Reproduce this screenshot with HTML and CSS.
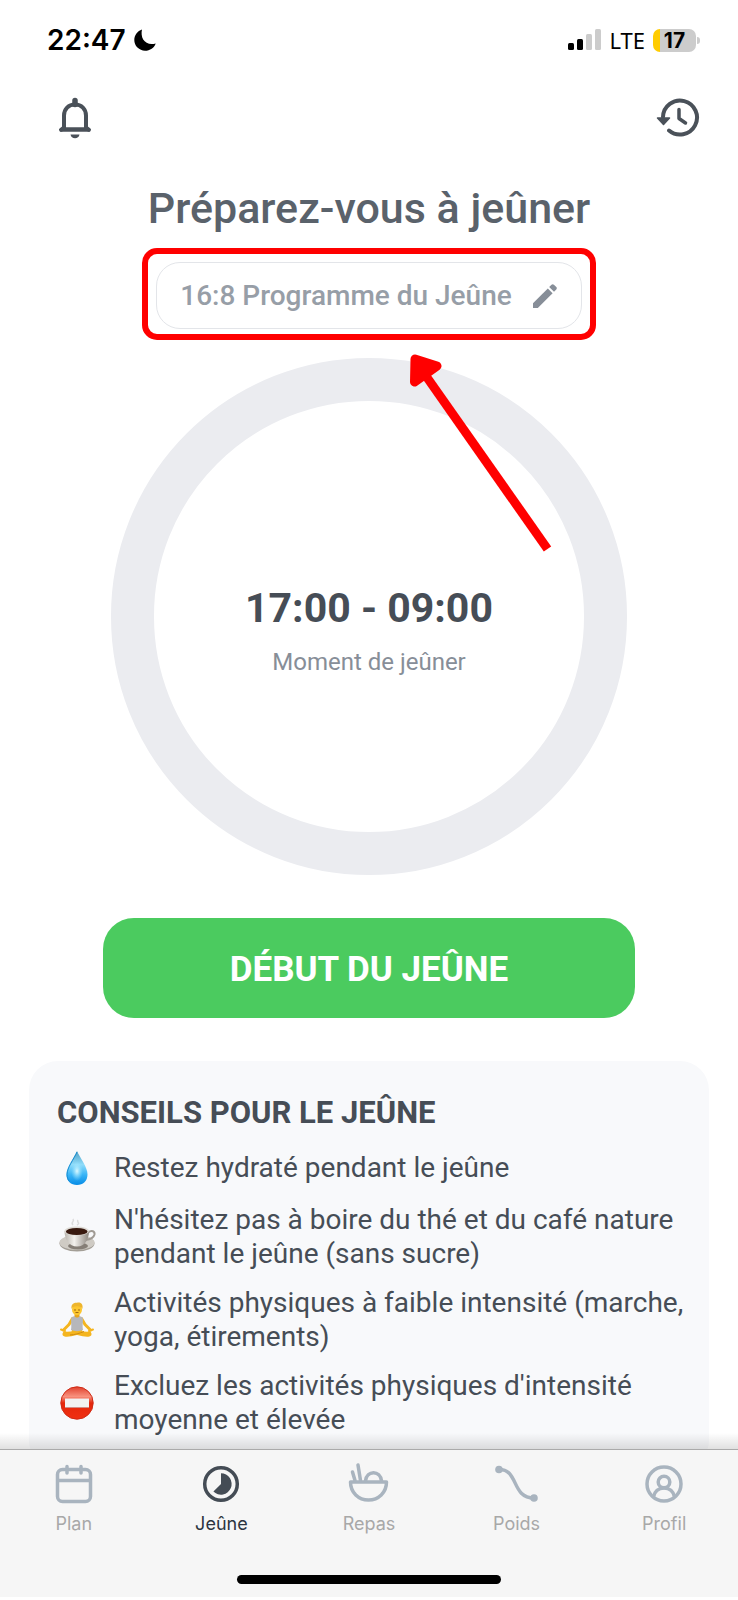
FILE: index.html
```html
<!DOCTYPE html>
<html lang="fr">
<head>
    <meta charset="UTF-8">
    <meta name="viewport" content="width=device-width, initial-scale=1.0">
    <title>Jeûne</title>
    <link rel="stylesheet" href="styles.css">
</head>
<body>
    <!-- Barre d'état -->
    <div class="status-bar">
        <div class="status-left">
            <span class="clock">22:47</span>
            <svg class="moon" width="22" height="22" viewBox="0 0 22 22">
                <path d="M8 0.500C3.500 2 0.300 6 0.300 11a10.700 10.700 0 0 0 10.700 10.700c5 0 9.300-3 10.700-7.300C16 16.200 11.500 14 9.200 10.500 7.500 7.500 7.200 3.800 8 .5z" fill="#000"/>
            </svg>
        </div>
        <div class="status-right">
            <svg width="33" height="22" viewBox="0 0 33 22">
                <rect x="0" y="14" width="6" height="7" rx="1.500" fill="#000"/>
                <rect x="9" y="10" width="6" height="11" rx="1.500" fill="#000"/>
                <rect x="18" y="5" width="6" height="16" rx="1.500" fill="#ccc"/>
                <rect x="27" y="0" width="6" height="21" rx="1.500" fill="#ccc"/>
            </svg>
            <span class="network">LTE</span>
            <span class="battery">17</span>
        </div>
    </div>

    <main class="content">
        <div class="toolbar">
            <button class="icon-btn" type="button" aria-label="Notifications">
                <svg width="34" height="42" viewBox="0 0 34 42" fill="none" stroke="#4a5159" stroke-width="4">
                    <path d="M17 3.500v4" stroke-width="5.500" stroke-linecap="round"/>
                    <path d="M6 32V18.500C6 12 10.500 7.500 17 7.500s11 4.500 11 11V32"/>
                    <path d="M4 32.500h26" stroke-width="4.500"/>
                    <path d="M3 32.800L6 30.500M31 32.800L28 30.500" stroke-width="4" stroke-linecap="round"/>
                    <path d="M12.500 37.500h9c-.5 2.500-2.200 3.800-4.500 3.800s-4-1.300-4.500-3.800z" fill="#4a5159" stroke="none"/>
                </svg>
            </button>
            <button class="icon-btn" type="button" aria-label="Historique">
                <svg width="44" height="42" viewBox="0 0 44 42" fill="none" stroke="#4a5159" stroke-width="4" stroke-linecap="round">
                    <path d="M7 20A17 17 0 1 1 13 33.500"/>
                    <path d="M1.500 21h12l-6 6.500z" fill="#4a5159" stroke-width="1.500" stroke-linejoin="round"/>
                    <path d="M23 12.500v9l6.500 4.500" stroke-width="3.500" stroke-linejoin="round"/>
                </svg>
            </button>
        </div>

        <h1 class="title">Préparez-vous à jeûner</h1>

        <div class="highlight">
            <button class="program" type="button">
                16:8 Programme du Jeûne
                <svg width="26" height="26" viewBox="0 0 26 26" fill="#878e98">
                    <path d="M1 20.200L15.800 5.400l4.800 4.800L5.800 25H1z"/>
                    <path d="M17.200 4l2.300-2.300c.7-.7 1.700-.7 2.400 0l2.400 2.400c.7.7.7 1.700 0 2.400L22 8.800z"/>
                </svg>
            </button>
        </div>

        <div class="ring">
            <div class="time">17:00 - 09:00</div>
            <div class="time-label">Moment de jeûner</div>
            <svg class="arrow" width="150" height="204" viewBox="0 0 150 204">
                <path d="M16 22L137.500 195" stroke="#f00" stroke-width="9" fill="none"/>
                <path d="M5 5L27 12 4.500 28z" fill="#f00" stroke="#f00" stroke-width="9" stroke-linejoin="round"/>
            </svg>
        </div>

        <button class="start" type="button">DÉBUT DU JEÛNE</button>

        <section class="tips">
            <h2>CONSEILS POUR LE JEÛNE</h2>
            <ul>
                <li>
                    <svg width="40" height="40" viewBox="0 0 40 40">
                        <defs>
                            <linearGradient id="water" x1="0" y1="0" x2="0" y2="1">
                                <stop offset="0" stop-color="#4f9fc4"/>
                                <stop offset=".4" stop-color="#8fdcfa"/>
                                <stop offset=".7" stop-color="#38b4f6"/>
                                <stop offset="1" stop-color="#078ce6"/>
                            </linearGradient>
                            <radialGradient id="shine">
                                <stop offset="0" stop-color="#dcf9ff"/>
                                <stop offset="1" stop-color="#8fe3ff" stop-opacity="0"/>
                            </radialGradient>
                        </defs>
                        <path d="M20 3c3 7 10.500 16 10.500 23.500C30.500 33 26 37 20 37S9.500 33 9.500 26.500C9.500 19 17 10 20 3z" fill="url(#water)"/>
                        <path d="M20 4c-3 7-10 15.500-10 22.500 0 3 1 5.500 2.500 7" fill="none" stroke="#168bd0" stroke-width="1"/>
                        <ellipse cx="20" cy="23" rx="6" ry="10" fill="url(#shine)"/>
                    </svg>
                    <span>Restez hydraté pendant le jeûne</span>
                </li>
                <li>
                    <svg width="40" height="40" viewBox="0 0 40 40">
                        <defs>
                            <linearGradient id="cup" x1="0" y1="0" x2="1" y2="0">
                                <stop offset="0" stop-color="#b9b5ae"/>
                                <stop offset=".4" stop-color="#f3f1ed"/>
                                <stop offset="1" stop-color="#8d8780"/>
                            </linearGradient>
                        </defs>
                        <path d="M16 8c-3-3 2-3 0-6M20 8c4-2-1-3 1-5" fill="none" stroke="#c8c8c8" stroke-width="1.500" opacity=".6"/>
                        <ellipse cx="20" cy="26.500" rx="17.500" ry="8" fill="#a39e96"/>
                        <ellipse cx="20" cy="25.500" rx="17.500" ry="7.500" fill="#cfcbc4"/>
                        <ellipse cx="21" cy="29" rx="10" ry="3.500" fill="#857e76"/>
                        <path d="M31 15.500c4-3 7-1 6.500 2-1 4-5 5-9 5.500" fill="none" stroke="#a09b94" stroke-width="2"/>
                        <path d="M7.500 14C7.500 22 12 29.500 20 29.500s12-7.500 12-15.500z" fill="url(#cup)"/>
                        <ellipse cx="19.700" cy="14" rx="12.200" ry="4.500" fill="#dedbd5"/>
                        <ellipse cx="19.700" cy="14.500" rx="10.800" ry="3.600" fill="#38190f"/>
                    </svg>
                    <span>N'hésitez pas à boire du thé et du café nature pendant le jeûne (sans sucre)</span>
                </li>
                <li>
                    <svg width="40" height="40" viewBox="0 0 40 40">
                        <g stroke="#f4b51f" fill="none" stroke-linecap="round" stroke-linejoin="round">
                            <path d="M15.500 18.500L12 24.500 6.500 30M24.500 18.500L28 24.500 33.500 30" stroke-width="3"/>
                            <path d="M4 29.500l4 1.500M36 29.500L32 31" stroke-width="2"/>
                            <path d="M8 34c5 .8 9-1 15-2.500M32 34c-5 .8-9-1-15-2.500" stroke-width="5"/>
                        </g>
                        <path d="M14.500 17.500c3-2.300 8-2.300 11 0 1.200 3-.5 7 .5 12.500-4 1.500-8 1.500-12 0 1-5.500-.7-9.500.5-12.500z" fill="#b6b7bb"/>
                        <path d="M13 35c5-.3 9-1.500 14-3.500" stroke="#d08c10" stroke-width="1" fill="none"/>
                        <path d="M17.500 12h5v4c-1 2-4 2-5 0z" fill="#e9a61b"/>
                        <ellipse cx="20" cy="9.500" rx="5" ry="5.800" fill="#fcc62e"/>
                        <path d="M14.600 9C13.800 5 16 2.500 20 2.800c4-1 6.400 1.700 5.400 6.200-.7-2-2-2.800-5.400-2.800S15.300 7 14.600 9z" fill="#eeb52c"/>
                        <path d="M17 10h2M21 10h2M18.500 12.500h3" stroke="#a06a10" stroke-width="1"/>
                    </svg>
                    <span>Activités physiques à faible intensité (marche, yoga, étirements)</span>
                </li>
                <li>
                    <svg width="40" height="40" viewBox="0 0 40 40">
                        <defs>
                            <linearGradient id="stop" x1="0" y1="0" x2="0" y2="1">
                                <stop offset="0" stop-color="#e0402c"/>
                                <stop offset=".3" stop-color="#f8917e"/>
                                <stop offset=".5" stop-color="#e4270b"/>
                                <stop offset="1" stop-color="#f03012"/>
                            </linearGradient>
                        </defs>
                        <circle cx="20" cy="20" r="16.200" fill="url(#stop)" stroke="#cf2b16" stroke-width="1"/>
                        <rect x="8" y="16" width="24" height="9" fill="#b0281a"/>
                        <rect x="8" y="15.500" width="24" height="9" fill="#f2f2f2"/>
                    </svg>
                    <span>Excluez les activités physiques d'intensité moyenne et élevée</span>
                </li>
            </ul>
        </section>
    </main>

    <!-- Navigation du bas -->
    <footer class="bottom">
        <nav class="tabs">
            <a class="tab" href="#">
                <svg width="44" height="44" viewBox="0 0 44 44" fill="none" stroke="#a9b4bf" stroke-width="3.500" stroke-linecap="round">
                    <rect x="5.500" y="7.500" width="33" height="32" rx="5"/>
                    <path d="M6 18.500h32M15 4.500v6.500M29 4.500v6.500"/>
                </svg>
                <span>Plan</span>
            </a>
            <a class="tab active" href="#">
                <svg width="44" height="44" viewBox="0 0 44 44">
                    <circle cx="22" cy="22" r="16.300" fill="none" stroke="#444c55" stroke-width="3.500"/>
                    <path d="M22 11.300a10.700 10.700 0 1 1-7.600 18.300L22 22z" fill="#444c55"/>
                </svg>
                <span>Jeûne</span>
            </a>
            <a class="tab" href="#">
                <svg width="44" height="44" viewBox="0 0 44 44" fill="none" stroke="#a9b4bf" stroke-width="3.500" stroke-linecap="round" stroke-linejoin="round">
                    <path d="M3.500 20h36c0 10.500-8 18-18 18s-18-7.500-18-18z"/>
                    <path d="M18.500 19c1-11 15-11 16 0M13.500 18.500L11 3M8 18.500L5.500 10"/>
                </svg>
                <span>Repas</span>
            </a>
            <a class="tab" href="#">
                <svg width="44" height="44" viewBox="0 0 44 44" fill="none" stroke="#a9b4bf" stroke-width="3.500">
                    <path d="M4 7.500C24 7 16 36 39 36"/>
                    <circle cx="4" cy="7.500" r="3.800" fill="#a9b4bf" stroke="none"/>
                    <circle cx="39" cy="36" r="3.800" fill="#a9b4bf" stroke="none"/>
                </svg>
                <span>Poids</span>
            </a>
            <a class="tab" href="#">
                <svg width="44" height="44" viewBox="0 0 44 44" fill="none" stroke="#a9b4bf" stroke-width="3.500">
                    <circle cx="22" cy="22" r="17"/>
                    <circle cx="22" cy="20" r="5.800"/>
                    <path d="M11.500 35c1-5.500 5-9 10.500-9s9.500 3.500 10.500 9"/>
                </svg>
                <span>Profil</span>
            </a>
        </nav>
        <div class="home-indicator"></div>
    </footer>
</body>
</html>
```

FILE: styles.css
```css
* {
    box-sizing: border-box;
}

body {
    margin: 0;
    height: 100vh;
    display: flex;
    flex-direction: column;
    background: #fff;
    color: #464d56;
    font-family: Roboto, "Noto Sans", sans-serif;
    padding-bottom: 3px;
}

button {
    font-family: inherit;
    cursor: pointer;
}

svg {
    display: block;
    flex-shrink: 0;
}

/* Barre d'état */
.status-bar {
    display: flex;
    justify-content: space-between;
    align-items: center;
    height: 80px;
    padding: 0 38px 0 47px;
    color: #000;
}

.status-left, .status-right {
    display: flex;
    align-items: center;
    gap: 8px;
}

.clock {
    font: 600 28px/32px Inter, sans-serif;
}

.network {
    font: 22px/24px "Noto Sans", sans-serif;
}

.battery {
    position: relative;
    width: 43px;
    margin-right: 4px;
    border-radius: 7px;
    background: linear-gradient(to right, #fc0 7px, #ccc 7px);
    font: bold 21px/23px Inter, sans-serif;
    text-align: center;
}

.battery::after {
    content: "";
    position: absolute;
    left: 44px;
    top: 8px;
    width: 3px;
    height: 7px;
    border-radius: 0 3px 3px 0;
    background: #ccc;
}

/* Contenu */
.content {
    flex: 1;
    min-height: 0;
    overflow: hidden;
}

.toolbar {
    display: flex;
    justify-content: space-between;
    padding: 17px 38px 0 58px;
}

.icon-btn {
    padding: 0;
    border: 0;
    background: none;
}

.title {
    margin: 45px 0 16px;
    font-size: 43px;
    line-height: 48px;
    font-weight: 500;
    text-align: center;
    color: #5a626b;
}

.highlight {
    width: fit-content;
    margin: 0 auto 18px;
    padding: 8px 8px 5px;
    border: 6px solid #f00;
    border-radius: 15px;
}

.program {
    display: flex;
    align-items: center;
    gap: 20px;
    height: 67px;
    padding: 0 23px;
    border: 1px solid #e3e5e9;
    border-radius: 24px;
    background: #fff;
    color: #979ea7;
    font-size: 28px;
    font-weight: 500;
}

.ring {
    position: relative;
    display: flex;
    flex-direction: column;
    align-items: center;
    justify-content: center;
    gap: 14px;
    width: 70%;
    aspect-ratio: 1;
    margin: 0 auto;
    padding-top: 29px;
    border: 43px solid #ebecf0;
    border-radius: 50%;
}

.time {
    font-size: 41px;
    line-height: 48px;
    font-weight: bold;
}

.time-label {
    font-size: 24px;
    line-height: 32px;
    color: #878e98;
}

/* la flèche part du cercle vers le bouton du programme */
.arrow {
    position: absolute;
    left: 256px;
    top: -47px;
}

.start {
    display: block;
    width: 72%;
    height: 100px;
    margin: 43px auto;
    padding: 3px 0 0;
    border: 0;
    border-radius: 31px;
    background: #4bcb5f;
    color: #fff;
    font-size: 35px;
    font-weight: bold;
}

.tips {
    margin: 0 29px;
    padding: 32px 14px 32px 28px;
    border-radius: 29px;
    background: #f8f9fb;
}

.tips h2 {
    margin: 0 0 15px;
    font-size: 31px;
    line-height: 40px;
    font-weight: bold;
}

.tips ul {
    display: flex;
    flex-direction: column;
    gap: 15px;
    margin: 0;
    padding: 0;
    list-style: none;
}

.tips li {
    display: flex;
    align-items: center;
    gap: 17px;
    font-size: 28px;
    line-height: 34px;
}

.tips li span {
    flex: 1;
}

/* Navigation du bas */
.bottom {
    position: relative;
    border-top: 1px solid #aaa;
    background: #f6f6f6;
}

.bottom::before {
    content: "";
    position: absolute;
    left: 0;
    right: 0;
    top: -17px;
    height: 16px;
    background: linear-gradient(rgba(0, 0, 0, 0), rgba(0, 0, 0, 0.12));
}

.tabs {
    display: flex;
    padding-top: 12px;
}

.tab {
    flex: 1;
    display: flex;
    flex-direction: column;
    align-items: center;
    gap: 6px;
    color: #a8a8a8;
    text-decoration: none;
    font: 18px/24px Inter, sans-serif;
}

.tab.active {
    color: #2c3440;
}

.home-indicator {
    width: 264px;
    height: 9px;
    margin: 39px auto 13px;
    border-radius: 5px;
    background: #000;
}
```
